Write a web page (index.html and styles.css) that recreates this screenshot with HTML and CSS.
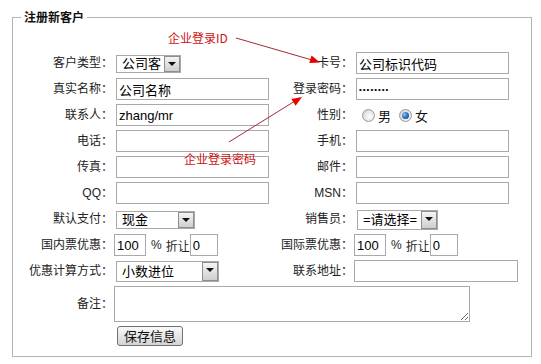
FILE: index.html
```html
<!DOCTYPE html>
<html lang="zh-CN">
<head>
<meta charset="utf-8">
<title>注册新客户</title>
<link rel="stylesheet" href="styles.css">
</head>
<body>
<div class="page">
  <fieldset class="box">
    <legend class="legend">注册新客户</legend>
    <div class="form">
      <label class="lbl">客户类型：</label>
      <div class="fld"><span class="sel sel-type"><select><option>公司客</option></select><span class="arrow"></span></span></div>
      <label class="lbl">卡号：</label>
      <div class="fld"><input class="txt" type="text" value="公司标识代码"></div>

      <label class="lbl">真实名称：</label>
      <div class="fld"><input class="txt" type="text" value="公司名称"></div>
      <label class="lbl">登录密码：</label>
      <div class="fld"><input class="txt pw" type="password" value="12345678"></div>

      <label class="lbl">联系人：</label>
      <div class="fld"><input class="txt" type="text" value="zhang/mr"></div>
      <label class="lbl">性别：</label>
      <div class="fld radios">
        <span class="radio"></span><span class="rtext">男</span>
        <span class="radio on"></span><span class="rtext">女</span>
      </div>

      <label class="lbl">电话：</label>
      <div class="fld"><input class="txt" type="text"></div>
      <label class="lbl">手机：</label>
      <div class="fld"><input class="txt" type="text"></div>

      <label class="lbl">传真：</label>
      <div class="fld"><input class="txt" type="text"></div>
      <label class="lbl">邮件：</label>
      <div class="fld"><input class="txt" type="text"></div>

      <label class="lbl">QQ：</label>
      <div class="fld"><input class="txt" type="text"></div>
      <label class="lbl">MSN：</label>
      <div class="fld"><input class="txt" type="text"></div>

      <label class="lbl">默认支付：</label>
      <div class="fld"><span class="sel sel-pay"><select><option>现金</option></select><span class="arrow"></span></span></div>
      <label class="lbl">销售员：</label>
      <div class="fld"><span class="sel sel-sales"><select><option>=请选择=</option></select><span class="arrow"></span></span></div>

      <label class="lbl">国内票优惠：</label>
      <div class="fld pct"><input class="num" type="text" value="100"><span class="pct-sign">%</span><span class="pct-word">折让</span><input class="num small" type="text" value="0"></div>
      <label class="lbl">国际票优惠：</label>
      <div class="fld pct pct-right"><input class="num" type="text" value="100"><span class="pct-sign">%</span><span class="pct-word">折让</span><input class="num small" type="text" value="0"></div>

      <label class="lbl">优惠计算方式：</label>
      <div class="fld"><span class="sel sel-calc"><select><option>小数进位</option></select><span class="arrow"></span></span></div>
      <label class="lbl">联系地址：</label>
      <div class="fld"><input class="txt addr" type="text"></div>

      <label class="lbl">备注：</label>
      <div class="fld wide"><textarea class="memo"></textarea></div>

      <span class="lbl"></span>
      <div class="fld wide"><button class="save" type="button">保存信息</button></div>
    </div>
  </fieldset>

  <div class="note note-id">企业登录ID</div>
  <div class="note note-pw">企业登录密码</div>
  <svg class="arrows" width="541" height="364" viewBox="0 0 541 364">
    <line x1="236" y1="38" x2="312" y2="60" stroke="#a3293a" stroke-width="1"/>
    <polygon points="320,62.5 309.3,63 311.5,55.5" fill="#e60000"/>
    <line x1="229" y1="142" x2="295" y2="101" stroke="#a3293a" stroke-width="1"/>
    <polygon points="302,97 295.6,105.7 291.4,98.9" fill="#e60000"/>
  </svg>
</div>
</body>
</html>
```
FILE: styles.css
```css
html, body {
  margin: 0;
  padding: 0;
  background: #ffffff;
}

body {
  font-family: "Liberation Sans", "Noto Sans CJK SC", sans-serif;
  color: #222222;
}

.page {
  position: relative;
  width: 541px;
  height: 364px;
  overflow: hidden;
}

.box {
  box-sizing: border-box;
  width: 520px;
  margin: 10px 0 0 12px;
  padding: 28px 12px 10px 8px;
  border: 1px solid #b4b4b4;
}

.legend {
  padding: 0 3px;
  font-size: 12px;
  line-height: 14px;
  font-weight: bold;
  color: #111111;
  font-family: "Noto Sans CJK SC", sans-serif;
}

.form {
  display: grid;
  grid-template-columns: 95px 164px 76px 163px;
  grid-template-rows: repeat(9, 22px) 36px 20px;
  row-gap: 4px;
  align-items: center;
}

.lbl {
  text-align: right;
  padding-right: 3px;
  font-size: 12px;
  line-height: 16px;
  white-space: nowrap;
  font-family: "Liberation Sans", "Noto Sans CJK SC", sans-serif;
  color: #222222;
}

.fld {
  display: flex;
  align-items: center;
  height: 100%;
}

.wide {
  grid-column: 2 / 5;
}

.txt {
  box-sizing: border-box;
  width: 153px;
  height: 22px;
  margin: 0;
  padding: 0 2px;
  border: 1px solid #a9a9a9;
  font-family: "Liberation Sans", "Noto Sans CJK SC", sans-serif;
  font-size: 13px;
  color: #000000;
  background: #ffffff;
  outline: none;
}

.txt.pw {
  font-size: 8px;
  letter-spacing: 1px;
}

.txt.addr {
  width: 164px;
  margin-left: -2px;
}

.sel {
  box-sizing: border-box;
  display: inline-flex;
  align-items: center;
  height: 18px;
  margin-top: 2px;
  border: 1px solid #a9a9a9;
  background: #ffffff;
}

.sel select {
  appearance: none;
  -webkit-appearance: none;
  flex: 1;
  min-width: 0;
  height: 16px;
  margin: 0;
  padding: 0 0 0 5px;
  border: none;
  background: transparent;
  font-family: "Liberation Sans", "Noto Sans CJK SC", sans-serif;
  font-size: 13px;
  line-height: 16px;
  color: #000000;
  outline: none;
}

.arrow {
  position: relative;
  box-sizing: border-box;
  width: 16px;
  height: 16px;
  border: 1px solid #8e8e8e;
  background: linear-gradient(#f4f4f4, #cfcfcf);
}

.arrow::after {
  content: "";
  position: absolute;
  left: 3px;
  top: 5px;
  border-left: 4px solid transparent;
  border-right: 4px solid transparent;
  border-top: 4px solid #111111;
}

.sel-type { width: 65px; }
.sel-pay { width: 79px; }
.sel-sales { width: 81px; height: 20px; margin-left: 1px; }
.sel-sales .arrow { height: 18px; }
.sel-calc { width: 103px; height: 21px; margin-top: 1px; }
.sel-calc .arrow { height: 19px; }

.radios {
  padding-left: 6px;
}

.radio {
  box-sizing: border-box;
  position: relative;
  width: 13px;
  height: 13px;
  border: 1px solid #9a9a9a;
  border-radius: 50%;
  background: radial-gradient(circle at 60% 60%, #ffffff 0%, #e4e4e4 55%, #c8c8c8 100%);
}

.radio.on::after {
  content: "";
  position: absolute;
  left: 2px;
  top: 2px;
  width: 7px;
  height: 7px;
  border-radius: 50%;
  background: radial-gradient(circle at 35% 35%, #8fc2f2 0%, #2b6fc0 50%, #0c3470 100%);
}

.rtext {
  margin: 0 8px 0 3px;
  font-size: 13px;
  font-family: "Noto Sans CJK SC", sans-serif;
  color: #111111;
}

.pct {
  margin-left: -2px;
}

.pct-right {
  margin-left: -2px;
}

.num {
  box-sizing: border-box;
  width: 32px;
  height: 22px;
  margin: 0;
  padding: 0 2px;
  border: 1px solid #a9a9a9;
  font-family: "Liberation Sans", sans-serif;
  font-size: 13px;
  color: #000000;
  outline: none;
}

.num.small {
  width: 28px;
}

.pct-sign {
  margin-left: 5px;
  font-size: 12px;
  font-family: "Liberation Sans", sans-serif;
}

.pct-word {
  margin-left: 4px;
  font-size: 12px;
  font-family: "Noto Sans CJK SC", sans-serif;
}

.memo {
  box-sizing: border-box;
  width: 356px;
  height: 36px;
  margin: 0 0 0 -2px;
  padding: 2px;
  border: 1px solid #a9a9a9;
  resize: both;
  font-family: "Liberation Sans", "Noto Sans CJK SC", sans-serif;
  font-size: 13px;
  outline: none;
}

.save {
  box-sizing: border-box;
  width: 66px;
  height: 20px;
  margin: 0 0 0 1px;
  padding: 0;
  border: 1px solid #707070;
  border-radius: 3px;
  background: linear-gradient(#fafafa, #e6e6e6 50%, #d4d4d4);
  font-family: "Noto Sans CJK SC", sans-serif;
  font-size: 13px;
  line-height: 18px;
  color: #111111;
}

.note {
  position: absolute;
  font-family: "Noto Sans CJK SC", sans-serif;
  font-size: 12px;
  line-height: 14px;
  color: #cc1111;
  white-space: nowrap;
}

.note-id {
  left: 168px;
  top: 31px;
}

.note-pw {
  left: 184px;
  top: 152px;
}

.arrows {
  position: absolute;
  left: 0;
  top: 0;
  pointer-events: none;
}
```
